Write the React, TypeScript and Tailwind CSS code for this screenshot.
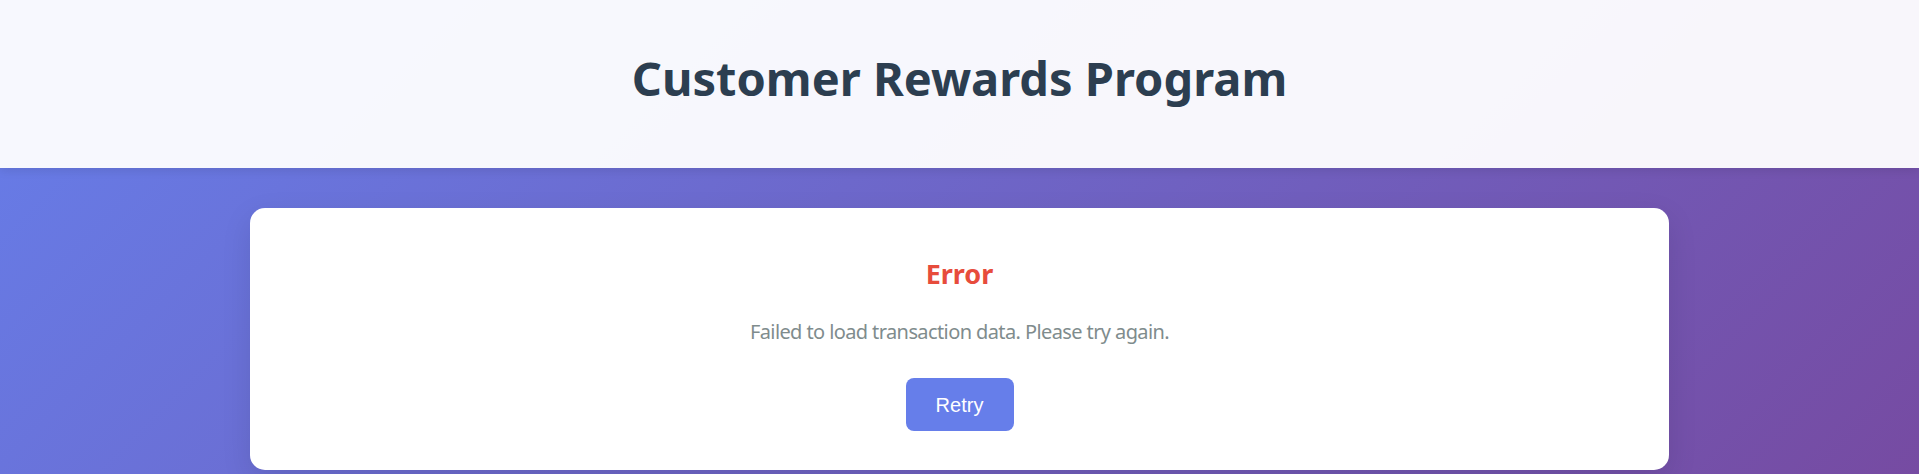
import React from "react";

export default function App() {
  return (
    <div
      className="min-h-screen w-full bg-[linear-gradient(135deg,#667eea_0%,#764ba2_100%)]"
      style={{ fontFamily: '"Noto Sans", "Open Sans", sans-serif' }}
    >
      <header className="flex h-[168px] items-center justify-center bg-[rgba(255,255,255,0.95)] pb-[12px] shadow-[0_2px_10px_rgba(0,0,0,0.1)]">
        <h1 className="text-[47px] font-bold leading-none text-[#2c3e50]">Customer Rewards Program</h1>
      </header>
      <main className="px-[250px] pt-[40px] pb-[4px]">
        <div className="flex flex-col items-center rounded-[15px] bg-white pt-[48px] pb-[39px] shadow-[0_10px_30px_rgba(0,0,0,0.1)]">
          <h2 className="text-[27px] font-bold leading-[36px] text-[#e74c3c]">Error</h2>
          <p className="mt-[25px] text-[20px] leading-[30px] tracking-[-0.6px] text-[#7f8c8d]">
            Failed to load transaction data. Please try again.
          </p>
          <button
            className="mt-[31px] h-[53px] w-[108px] rounded-[8px] bg-[#667eea] text-[20px] text-white"
            style={{ fontFamily: '"Liberation Sans", Arial, sans-serif' }}
          >
            Retry
          </button>
        </div>
      </main>
    </div>
  );
}
